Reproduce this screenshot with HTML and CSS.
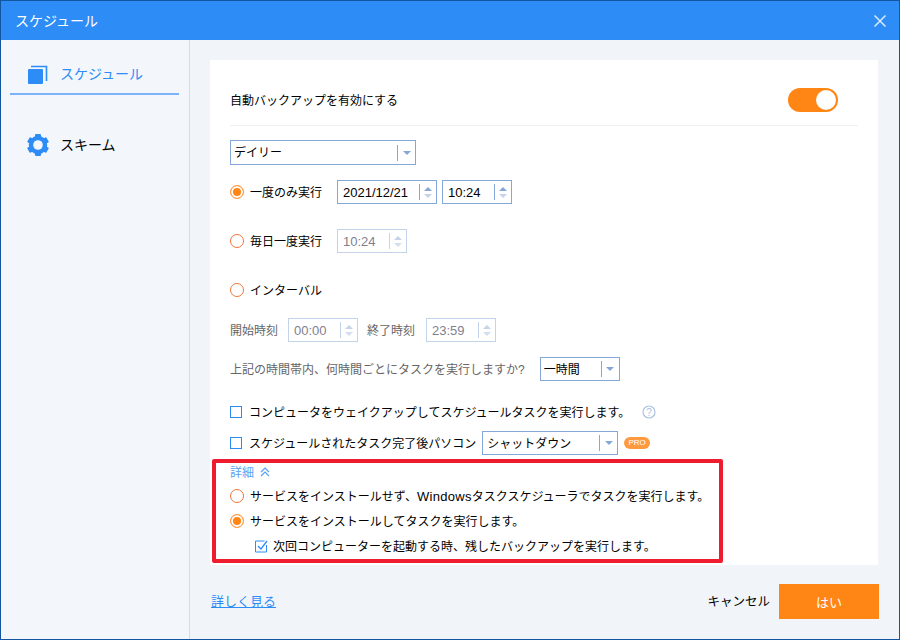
FILE: index.html
```html
<!DOCTYPE html>
<html lang="ja">
<head>
<meta charset="utf-8">
<title>スケジュール</title>
<link rel="stylesheet" href="styles.css">
</head>
<body>
<div class="window">
  <header class="titlebar">
    <span class="title t">スケジュール</span>
    <svg class="close" width="12" height="12" viewBox="0 0 12 12"><path d="M.5.5l11 11M11.5.5l-11 11" stroke="#dcebfd" stroke-width="1.5" fill="none"/></svg>
  </header>
  <div class="body">
    <nav class="sidebar">
      <div class="nav-item active">
        <svg class="nav-icon" width="22" height="22" viewBox="0 0 22 22"><rect x="1" y="6" width="15" height="15" rx="1" fill="#2d8cf6"/><path d="M4 3.5h15.5V18" fill="none" stroke="#2d8cf6" stroke-width="1.6"/></svg>
        <span class="t">スケジュール</span>
      </div>
      <div class="nav-item">
        <svg class="nav-icon" width="22" height="22" viewBox="0 0 22 22">
          <g fill="#2d8cf6">
            <rect x="8" y="0" width="6" height="22" rx="1"/>
            <rect x="8" y="0" width="6" height="22" rx="1" transform="rotate(60 11 11)"/>
            <rect x="8" y="0" width="6" height="22" rx="1" transform="rotate(120 11 11)"/>
          </g>
          <circle cx="11" cy="11" r="7" fill="none" stroke="#2d8cf6" stroke-width="4.5"/>
          <circle cx="11" cy="11" r="4.8" fill="#f3f6fb"/>
        </svg>
        <span class="t">スキーム</span>
      </div>
    </nav>
    <main class="main">
      <section class="card">
        <div class="head-row">
          <span class="t">自動バックアップを有効にする</span>
          <span class="toggle"><span class="knob"></span></span>
        </div>
        <div class="row r-select">
          <div class="select w-daily"><span class="sel-text t">デイリー</span><span class="sel-btn"><i class="tri"></i></span></div>
        </div>
        <div class="row r-once">
          <label class="radio-label"><i class="radio on"></i><span class="t">一度のみ実行</span></label>
          <div class="spin w-date"><span class="val">2021/12/21</span><span class="arrows"><i class="up"></i><i class="down"></i></span></div>
          <div class="spin w-time"><span class="val">10:24</span><span class="arrows"><i class="up"></i><i class="down"></i></span></div>
        </div>
        <div class="row r-gap">
          <label class="radio-label"><i class="radio"></i><span class="t">毎日一度実行</span></label>
          <div class="spin w-time off"><span class="val">10:24</span><span class="arrows"><i class="up"></i><i class="down"></i></span></div>
        </div>
        <div class="row r-gap">
          <label class="radio-label"><i class="radio"></i><span class="t">インターバル</span></label>
        </div>
        <div class="row r-range muted">
          <span class="t">開始時刻</span>
          <div class="spin w-time off g-start"><span class="val">00:00</span><span class="arrows"><i class="up"></i><i class="down"></i></span></div>
          <span class="g-end-label t">終了時刻</span>
          <div class="spin w-time off g-end"><span class="val">23:59</span><span class="arrows"><i class="up"></i><i class="down"></i></span></div>
        </div>
        <div class="row r-hour muted">
          <span class="t">上記の時間帯内、何時間ごとにタスクを実行しますか?</span>
          <div class="select w-hour"><span class="sel-text t">一時間</span><span class="sel-btn"><i class="tri"></i></span></div>
        </div>
        <div class="row r-wake">
          <i class="check"></i><span class="t">コンピュータをウェイクアップしてスケジュールタスクを実行します。</span>
          <svg class="help" width="14" height="14" viewBox="0 0 14 14"><circle cx="7" cy="7" r="6" fill="none" stroke="#a9c4e0" stroke-width="1.2"/><text x="7" y="10.5" text-anchor="middle" class="help-mark">?</text></svg>
        </div>
        <div class="row r-off">
          <i class="check"></i><span class="t">スケジュールされたタスク完了後パソコン</span>
          <div class="select w-shut"><span class="sel-text t">シャットダウン</span><span class="sel-btn"><i class="tri"></i></span></div>
          <span class="pro">PRO</span>
        </div>
        <div class="row r-detail">
          <span class="detail t">詳細</span>
          <svg width="10" height="10" viewBox="0 0 10 10"><path d="M1 5l4-4 4 4M1 9l4-4 4 4" fill="none" stroke="#5aa2f5" stroke-width="1.2"/></svg>
        </div>
        <div class="row r-adv first">
          <label class="radio-label"><i class="radio"></i><span class="t">サービスをインストールせず、<span class="latin">Windows</span>タスクスケジューラでタスクを実行します。</span></label>
        </div>
        <div class="row r-adv">
          <label class="radio-label"><i class="radio on"></i><span class="t">サービスをインストールしてタスクを実行します。</span></label>
        </div>
        <div class="row r-adv indent">
          <svg class="checked" width="13" height="13" viewBox="0 0 13 13"><path d="M11.5 5v7H.5V1h9" fill="none" stroke="#2d8cf6"/><path d="M3 6l3 3 6-8" fill="none" stroke="#2d8cf6" stroke-width="1.3"/></svg>
          <span class="t">次回コンピューターを起動する時、残したバックアップを実行します。</span>
        </div>
      </section>
      <footer class="footer">
        <a class="more t">詳しく見る</a>
        <span class="cancel t">キャンセル</span>
        <button class="ok"><span class="t">はい</span></button>
      </footer>
    </main>
  </div>
  <div class="highlight"></div>
</div>
</body>
</html>
```

FILE: styles.css
```css
html, body {
  margin: 0;
  padding: 0;
}
body {
  font-family: "Liberation Sans", "Noto Sans CJK JP", sans-serif;
  font-size: 12px;
  color: #000;
  background: #f1f5fa;
}
i { display: block; font-style: normal; }
.t { padding-bottom: 2px; }
.window {
  position: relative;
  box-sizing: border-box;
  width: 900px;
  height: 640px;
  border: 1px solid #14559f;
  display: flex;
  flex-direction: column;
  overflow: hidden;
}
.titlebar {
  flex: none;
  height: 39px;
  background: #2d8cf6;
  color: #fff;
  font-size: 14px;
  display: flex;
  align-items: center;
  justify-content: space-between;
  padding: 0 13px 0 14px;
}
.body {
  flex: 1;
  display: flex;
  min-height: 0;
}
.sidebar {
  flex: none;
  box-sizing: border-box;
  width: 189px;
  background: #f3f6fb;
  border-right: 1px solid #d8dde3;
  padding: 20px 10px 0 9px;
  font-size: 14px;
}
.nav-item {
  display: flex;
  align-items: center;
  gap: 11px;
  height: 28px;
  padding: 0 0 5px 17px;
  border-bottom: 2px solid transparent;
  margin-bottom: 36px;
}
.nav-item.active {
  color: #2d8cf6;
  border-bottom-color: #7ab3fb;
}
.main {
  flex: 1;
  padding: 20px 21px 0 20px;
  min-width: 0;
}
.card {
  box-sizing: border-box;
  height: 505px;
  background: #fff;
  padding: 0 20px;
}
.head-row {
  display: flex;
  align-items: center;
  justify-content: space-between;
  height: 24px;
  padding: 28px 20px 13px 0;
  border-bottom: 1px solid #f0f0f0;
}
.toggle {
  display: flex;
  justify-content: flex-end;
  align-items: center;
  box-sizing: border-box;
  width: 50px;
  height: 24px;
  padding-right: 2px;
  background: #ff8614;
  border-radius: 12px;
}
.knob {
  width: 20px;
  height: 20px;
  border-radius: 50%;
  background: #fff;
}
.row {
  display: flex;
  align-items: center;
  height: 24px;
  white-space: nowrap;
}
.r-select { margin-top: 14px; height: 25px; }
.r-once { margin-top: 15px; }
.r-gap { margin-top: 25px; }
.r-range { margin-top: 16px; }
.r-hour { margin-top: 15px; }
.r-wake { margin-top: 19px; gap: 7px; }
.r-off { margin-top: 7px; gap: 7px; }
.r-detail { margin-top: 5px; gap: 6px; }
.r-adv { margin-top: 5px; height: 20px; }
.r-adv.first { margin-top: 2px; }
.muted { color: #666; }
.radio-label {
  display: flex;
  align-items: center;
  gap: 6px;
  width: 107px;
}
.r-adv .radio-label { width: auto; }
.radio {
  box-sizing: border-box;
  width: 14px;
  height: 14px;
  border: 1px solid #f0753a;
  border-radius: 50%;
  flex: none;
}
.radio.on {
  border-color: #ff9a4a;
  background: #ff8614;
  box-shadow: inset 0 0 0 2px #fff;
}
.check {
  box-sizing: border-box;
  width: 12px;
  height: 12px;
  border: 1px solid #2d8cf6;
  flex: none;
}
.select, .spin {
  box-sizing: border-box;
  display: flex;
  align-items: center;
  height: 24px;
  border: 1px solid #86a8d8;
  background: #fff;
  color: #000;
}
.select { height: 25px; }
.w-daily { width: 186px; }
.w-hour { width: 80px; margin-left: 15px; height: 24px; }
.w-shut { width: 136px; margin-left: -1px; height: 24px; }
.sel-text {
  flex: 1;
  padding-left: 3px;
}
.w-shut .sel-text { padding-left: 4px; }
.sel-btn {
  flex: none;
  display: flex;
  align-items: center;
  justify-content: center;
  box-sizing: border-box;
  width: 18px;
  height: 16px;
  border-left: 1px solid #86a8d8;
}
.tri {
  width: 0;
  height: 0;
  border-left: 4px solid transparent;
  border-right: 4px solid transparent;
  border-top: 4px solid #86a8d8;
}
.spin { font-size: 13px; }
.val {
  flex: 1;
  padding-left: 5px;
}
.arrows {
  flex: none;
  box-sizing: border-box;
  width: 17px;
  height: 16px;
  border-left: 1px solid #86a8d8;
  display: flex;
  flex-direction: column;
  align-items: center;
  justify-content: center;
  gap: 3px;
}
.up, .down {
  width: 0;
  height: 0;
  border-left: 4px solid transparent;
  border-right: 4px solid transparent;
}
.up { border-bottom: 4px solid #86a8d8; }
.down { border-top: 4px solid #c5d4e8; }
.w-date { width: 100px; margin-right: 5px; }
.w-time { width: 70px; }
.spin.off { border-color: #c2d3ea; color: #7f7f8f; }
.spin.off .arrows { border-left-color: #c2d3ea; }
.spin.off .up { border-bottom-color: #c5d4e8; }
.spin.off .down { border-top-color: #d5dfec; }
.g-start { margin-left: 10px; }
.g-end-label { margin-left: 9px; }
.g-end { margin-left: 11px; }
.help { margin-left: 5px; }
.help-mark {
  font-size: 10px;
  fill: #a9c4e0;
  font-family: "Liberation Sans", sans-serif;
}
.pro {
  box-sizing: border-box;
  width: 26px;
  height: 12px;
  line-height: 12px;
  border-radius: 6px;
  background: #ff9a3e;
  color: #fff;
  font-size: 8px;
  text-align: center;
  margin-left: -1px;
}
.detail { color: #5aa2f5; }
.latin { font-size: 13px; letter-spacing: .3px; }
.indent { padding-left: 25px; gap: 5px; }
.footer {
  display: flex;
  align-items: center;
  height: 35px;
  margin: 19px -1px 0 1px;
  font-size: 13px;
}
.more {
  color: #2d8cf6;
  text-decoration: underline;
  margin-right: auto;
}
.cancel { margin-right: 9px; font-size: 12.5px; }
.ok {
  width: 100px;
  height: 35px;
  border: 0;
  padding: 0;
  background: #ff8614;
  color: #fff;
  font: inherit;
}
.highlight {
  position: absolute;
  left: 211px;
  top: 458px;
  width: 511px;
  height: 104px;
  box-sizing: border-box;
  border: 4px solid #ee1c2e;
  border-radius: 2px;
  pointer-events: none;
}
```
